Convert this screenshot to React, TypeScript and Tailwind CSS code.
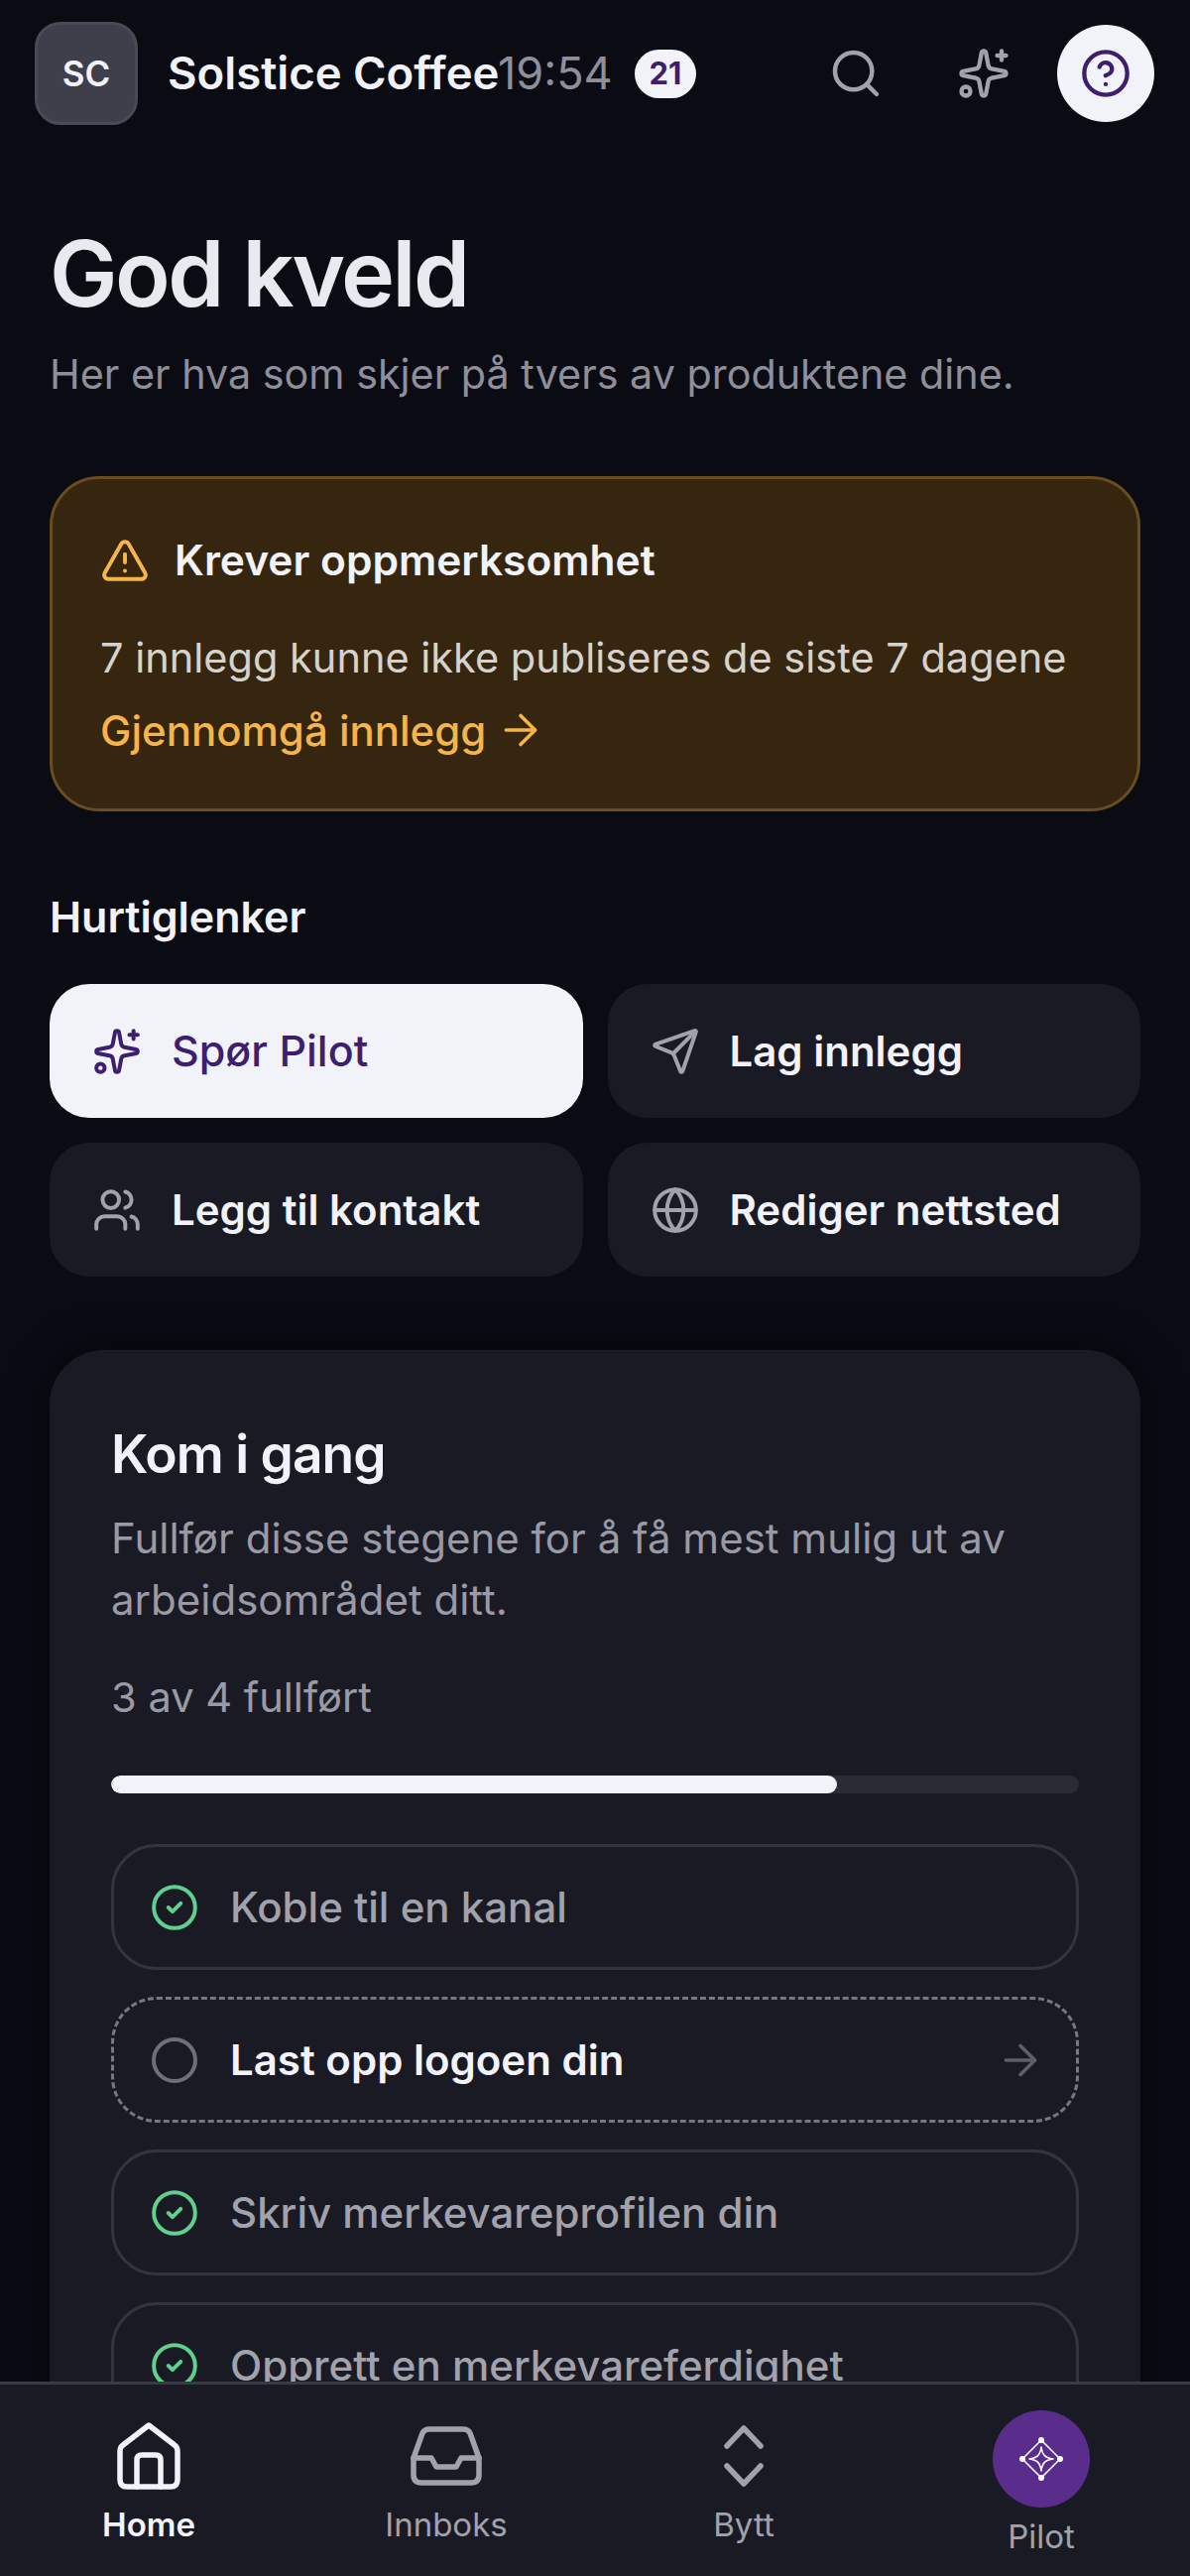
import { ArrowRight, CircleCheck, CircleHelp, Globe, Search, Send, Sparkles, TriangleAlert, Users } from 'lucide-react'
import type { ReactNode } from 'react'

function HomeIcon() {
  return (
    <svg viewBox="0 0 64 68" className="w-[64px] h-[68px]" fill="none" stroke="currentColor" strokeWidth="5.5" strokeLinejoin="round" strokeLinecap="round">
      <path d="M32 3 L58 23 Q61 25 61 29 V58 Q61 65 54 65 H10 Q3 65 3 58 V29 Q3 25 6 23 Z" />
      <path d="M20 65 V38 Q20 33 25 33 H39 Q44 33 44 38 V65" />
    </svg>
  )
}

function InboxIcon() {
  return (
    <svg viewBox="0 0 72 60" className="w-[72px] h-[60px]" fill="none" stroke="currentColor" strokeWidth="5.5" strokeLinejoin="round" strokeLinecap="round">
      <path d="M3 32 L12 7 Q14 3 19 3 H53 Q58 3 60 7 L69 32 V49 Q69 57 61 57 H11 Q3 57 3 49 Z" />
      <path d="M3 32 H21 L26 41 H46 L51 32 H69" />
    </svg>
  )
}

function SwitchIcon() {
  return (
    <svg viewBox="0 0 40 62" className="w-[40px] h-[62px]" fill="none" stroke="currentColor" strokeWidth="5.5" strokeLinejoin="round" strokeLinecap="round">
      <path d="M3 21 L20 3 L37 21" />
      <path d="M3 41 L20 59 L37 41" />
    </svg>
  )
}

function PilotIcon() {
  return (
    <svg viewBox="0 0 46 46" className="w-[46px] h-[46px]" fill="none" stroke="white" strokeWidth="1.6" strokeLinejoin="round">
      <path d="M23 4 L42 23 L23 42 L4 23 Z" />
      <path d="M23 11 C24 19 27 22 35 23 C27 24 24 27 23 35 C22 27 19 24 11 23 C19 22 22 19 23 11 Z" />
      <circle cx="23" cy="4" r="3" fill="white" stroke="none" />
      <circle cx="42" cy="23" r="3" fill="white" stroke="none" />
      <circle cx="23" cy="42" r="3" fill="white" stroke="none" />
      <circle cx="4" cy="23" r="3" fill="white" stroke="none" />
    </svg>
  )
}

function QuickLink({ icon, label, active }: { icon: ReactNode; label: string; active?: boolean }) {
  return (
    <div
      className={
        active
          ? 'h-[135px] rounded-[40px] bg-[#f2f3f9] text-[#3d1f6e] flex items-center gap-[30px] pl-[43px] text-[43px] font-medium'
          : 'h-[135px] rounded-[40px] bg-[#1a1a24] text-[#f2f3f9] flex items-center gap-[30px] pl-[43px] text-[42px] font-semibold'
      }
    >
      {icon}
      <span>{label}</span>
    </div>
  )
}

function Step({ label, done, showArrow }: { label: string; done: boolean; showArrow?: boolean }) {
  return (
    <div
      className={
        done
          ? 'h-[127px] shrink-0 rounded-[46px] border-[3px] border-[#34343f] flex items-center pl-[36px] pr-[31px] gap-[31px]'
          : 'h-[127px] shrink-0 rounded-[46px] border-[3.5px] border-dashed border-[#77777f] flex items-center pl-[36px] pr-[31px] gap-[31px]'
      }
    >
      {done ? (
        <CircleCheck size={50} strokeWidth={1.9} className="text-[#5fd08d] shrink-0" />
      ) : (
        <span className="w-[46px] h-[46px] mx-[2px] rounded-full border-[4px] border-[#6f6f79] shrink-0" />
      )}
      <span className={done ? 'flex-1 text-[42px] text-[#a2a2ad] font-medium' : 'flex-1 text-[42px] text-[#f2f3f9] font-semibold'}>{label}</span>
      {showArrow && <ArrowRight size={50} strokeWidth={1.7} className="text-[#5f5f69]" />}
    </div>
  )
}

function NavItem({ icon, label, active }: { icon: ReactNode; label: string; active?: boolean }) {
  return (
    <div className={active ? 'flex flex-col items-center text-[#f2f3f9] font-semibold' : 'flex flex-col items-center text-[#a2a2ad]'}>
      <div className="h-[72px] flex items-center justify-center">{icon}</div>
      <span className="text-[33px] mt-[11px] leading-[44px]">{label}</span>
    </div>
  )
}

export default function App() {
  return (
    <div className="w-[1200px] h-[2597px] bg-[#0b0b14] flex flex-col overflow-hidden font-['Inter',sans-serif]">
      <div className="flex-1 min-h-0 overflow-hidden">
        <header className="flex items-center pt-[22px] pl-[35px] pr-[36px]">
          <div className="w-[104px] h-[104px] rounded-[26px] bg-[#3f3f4b] border-[3px] border-[#4a4a56] flex items-center justify-center text-[#f2f3f9] text-[35px] font-semibold">
            SC
          </div>
          <div className="w-[333px] ml-[30px] whitespace-nowrap text-[#f2f3f9] text-[45.5px] font-semibold">Solstice Coffee</div>
          <div className="text-[#8f8f9a] text-[45px] w-[113px]">19:54</div>
          <div className="ml-[25px] w-[62px] h-[49px] rounded-full bg-[#f2f3f9] text-[#3d1f6e] text-[31px] font-bold flex items-center justify-center">21</div>
          <Search size={56} strokeWidth={1.9} className="ml-[133px] text-[#a2a2ad]" />
          <Sparkles size={54} strokeWidth={1.9} className="ml-[74px] text-[#a2a2ad]" />
          <div className="ml-[47px] w-[98px] h-[98px] rounded-full bg-[#f2f3f9] flex items-center justify-center">
            <CircleHelp size={52} strokeWidth={2} className="text-[#3d1f6e]" />
          </div>
        </header>

        <div className="px-[50px]">
          <h1 className="mt-[97px] text-[#e9eaef] text-[91.5px] leading-[106px] font-semibold tracking-[-2.5px]">God kveld</h1>
          <p className="mt-[20px] text-[#8f8f9c] text-[41.3px] leading-[56px]">Her er hva som skjer på tvers av produktene dine.</p>

          <section className="mt-[75px] h-[338px] rounded-[50px] bg-[#36260f] border-[3px] border-[#6a4d1e] pl-[48px] pt-[50px]">
            <div className="flex items-center gap-[25px]">
              <TriangleAlert size={50} strokeWidth={1.9} className="text-[#f5b54a]" />
              <span className="text-[#f2f3f9] text-[42.5px] font-semibold">Krever oppmerksomhet</span>
            </div>
            <p className="mt-[35px] text-[#d6d3cf] text-[41.5px] leading-[62px]">7 innlegg kunne ikke publiseres de siste 7 dagene</p>
            <div className="mt-[11px] flex items-center gap-[10px] text-[#f5b54a] text-[42px] font-medium">
              <span>Gjennomgå innlegg</span>
              <ArrowRight size={50} strokeWidth={1.7} />
            </div>
          </section>

          <h2 className="mt-[80px] text-[#f2f3f9] text-[43px] leading-[52px] font-semibold">Hurtiglenker</h2>
          <div className="mt-[42px] grid grid-cols-2 gap-[25px]">
            <QuickLink icon={<Sparkles size={50} strokeWidth={1.9} />} label="Spør Pilot" active />
            <QuickLink icon={<Send size={50} strokeWidth={1.9} className="text-[#a2a2ad]" />} label="Lag innlegg" />
            <QuickLink icon={<Users size={50} strokeWidth={1.9} className="text-[#a2a2ad]" />} label="Legg til kontakt" />
            <QuickLink icon={<Globe size={50} strokeWidth={1.9} className="text-[#a2a2ad]" />} label="Rediger nettsted" />
          </div>

          <section className="mt-[74px] rounded-[55px] bg-[#1a1a24] px-[62px] pt-[69px] pb-[40px] h-[1200px] shadow-[0_0_40px_rgba(0,0,0,0.6)]">
            <h2 className="text-[#f2f3f9] text-[53.3px] leading-[72px] font-semibold tracking-[-1px]">Kom i gang</h2>
            <p className="mt-[18px] text-[#9a9aa6] text-[42px] leading-[62px]">Fullfør disse stegene for å få mest mulig ut av arbeidsområdet ditt.</p>
            <p className="mt-[36px] text-[#9a9aa6] text-[41.6px] leading-[62px]">3 av 4 fullført</p>
            <div className="mt-[48px] h-[18px] rounded-full bg-[#2b2b35] overflow-hidden">
              <div className="h-full rounded-full bg-[#f2f3f9]" style={{ width: '75%' }} />
            </div>
            <div className="mt-[51px] flex flex-col gap-[27px]">
              <Step label="Koble til en kanal" done />
              <Step label="Last opp logoen din" done={false} showArrow />
              <Step label="Skriv merkevareprofilen din" done />
              <Step label="Opprett en merkevareferdighet" done />
            </div>
          </section>
        </div>
      </div>

      <nav className="h-[196px] shrink-0 bg-[#1a1a24] border-t-[3px] border-[#3a3a46] grid grid-cols-4 pt-[36px]">
        <NavItem icon={<HomeIcon />} label="Home" active />
        <NavItem icon={<InboxIcon />} label="Innboks" />
        <NavItem icon={<SwitchIcon />} label="Bytt" />
        <div className="flex flex-col items-center text-[#a2a2ad] -mt-[10px]">
          <div className="w-[98px] h-[98px] rounded-full bg-[#5a2d8c] flex items-center justify-center">
            <PilotIcon />
          </div>
          <span className="text-[33px] mt-[7px] leading-[44px]">Pilot</span>
        </div>
      </nav>
    </div>
  )
}
